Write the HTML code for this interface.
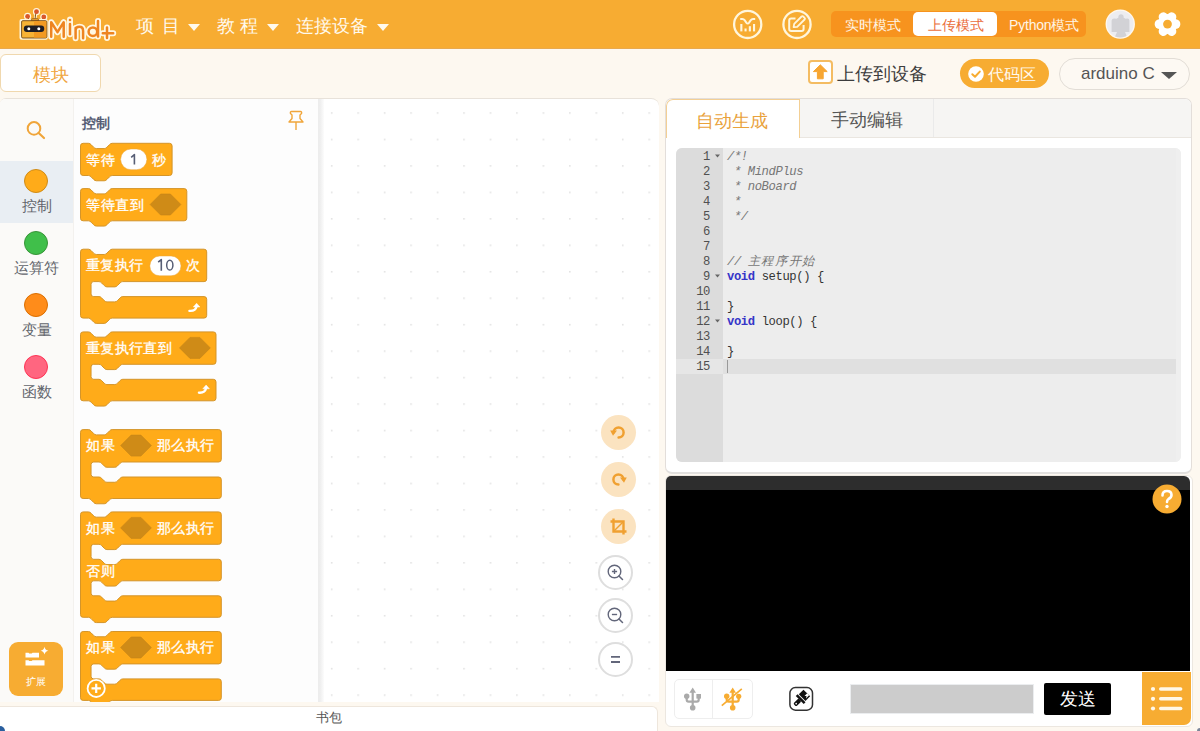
<!DOCTYPE html>
<html><head><meta charset="utf-8">
<style>
*{margin:0;padding:0;box-sizing:border-box;}
html,body{width:1200px;height:731px;overflow:hidden;background:#FDF8F0;font-family:"Liberation Sans",sans-serif;}
.a{position:absolute;}
#top{left:0;top:0;width:1200px;height:49px;background:#F7AC32;border-bottom:1px solid #E8A94E;}
.nav{position:absolute;top:14px;font-size:18px;color:#FFF9EC;line-height:24px;white-space:nowrap;}
.tri{position:absolute;width:0;height:0;border-left:6px solid transparent;border-right:6px solid transparent;border-top:7px solid #FFF9EC;}
.seg{position:absolute;top:11px;height:26px;font-size:14px;line-height:26px;color:#FFF5E6;white-space:nowrap;}
.cat{position:absolute;left:0;width:73px;height:62px;}
.cat .dot{position:absolute;left:24px;top:8px;width:24px;height:24px;border-radius:50%;}
.cat .lbl{position:absolute;left:0;width:73px;top:36px;text-align:center;font-size:15px;color:#62656C;line-height:20px;}
.blk{position:absolute;font-size:14px;color:#fff;line-height:18px;white-space:nowrap;}
.code{position:absolute;left:727px;font-family:"Liberation Mono",monospace;font-size:12.2px;letter-spacing:-0.39px;line-height:15px;color:#333;white-space:pre;}
.ln{position:absolute;left:676px;width:34px;text-align:right;font-family:"Liberation Mono",monospace;font-size:12.2px;letter-spacing:-0.39px;line-height:15px;color:#505050;}
.zb{position:absolute;border-radius:50%;}
</style></head><body>
<!-- ===== TOP BAR ===== -->
<div id="top" class="a">
  <svg class="a" style="left:0;top:0" width="130" height="49" viewBox="0 0 130 49">
    <!-- antennas -->
    <g stroke="#FFF6DC" stroke-width="2.6" fill="none" stroke-linecap="round">
      <line x1="27.6" y1="16.4" x2="29" y2="20"/><line x1="36.5" y1="11.7" x2="35" y2="19"/><line x1="43.8" y1="17" x2="42" y2="20"/>
    </g>
    <g fill="#FFF6DC"><circle cx="27.6" cy="16.4" r="3.6"/><circle cx="36.5" cy="11.7" r="3.6"/><circle cx="43.8" cy="17" r="3.6"/></g>
    <g stroke="#8A5A20" stroke-width="1" fill="none"><line x1="27.6" y1="16.4" x2="29" y2="20"/><line x1="36" y1="12" x2="35" y2="19"/><line x1="43.8" y1="17" x2="42" y2="20"/></g>
    <g fill="#D9582B"><circle cx="27.6" cy="16.4" r="2.4"/><circle cx="36.5" cy="11.7" r="2.4"/><circle cx="43.8" cy="17" r="2.4"/></g>
    <rect x="19.5" y="19" width="28.3" height="20.8" rx="2" fill="#FFF6DC"/>
    <path d="M31 20.5 Q31 18.6 33 18.6 H37 Q39 18.6 39 20.5Z" fill="#E9A030" stroke="#7A4A10" stroke-width="0.6"/>
    <rect x="21.6" y="20.7" width="25.2" height="17.3" rx="1.2" fill="#F8B334" stroke="#6E4512" stroke-width="0.9"/>
    <rect x="34" y="21.2" width="12.3" height="16.4" fill="#F29A22"/>
    <rect x="23.8" y="25.4" width="20.4" height="6.6" rx="3" fill="#1E1E24"/>
    <circle cx="28.8" cy="28.8" r="1.5" fill="#fff"/><circle cx="38.8" cy="28.8" r="1.5" fill="#fff"/>
    <!-- Mind+ -->
    <g fill="none" stroke="#FFF7E2" stroke-width="6" stroke-linecap="round" stroke-linejoin="round">
      <path d="M51.2 36.8 V22.2 L57.5 32.2 L63.7 22.2 V36.8"/>
      <path d="M70 19.6 V34.3"/>
      <path d="M75.6 38.2 V28 M75.6 30.5 C75.6 28 77.5 26.8 79.4 26.8 C82 26.8 83.1 28.4 83.1 31 V38.2"/>
      <circle cx="92.9" cy="31.7" r="4.3"/><path d="M98 20.9 V36.4"/>
      <path d="M102.8 33.2 H113.2 M107 27.6 V37.9"/>
    </g>
    <g fill="none" stroke="#EE8420" stroke-width="2.5" stroke-linecap="round" stroke-linejoin="round">
      <path d="M51.2 36.8 V22.2 L57.5 32.2 L63.7 22.2 V36.8"/>
      <path d="M70 24 V34.3"/>
      <path d="M75.6 38.2 V28 M75.6 30.5 C75.6 28 77.5 26.8 79.4 26.8 C82 26.8 83.1 28.4 83.1 31 V38.2"/>
      <circle cx="92.9" cy="31.7" r="4.3" fill="#FFF7E2"/><path d="M98 20.9 V36.4"/>
      <path d="M102.8 33.2 H113.2 M107 27.6 V37.9"/>
    </g>
    <circle cx="70" cy="20" r="1.3" fill="#EE8420"/>
  </svg>
  <div class="nav" style="left:136px;">项 <span style="margin-left:3px">目</span></div>
  <div class="tri" style="left:188px;top:24px;"></div>
  <div class="nav" style="left:217px;">教 程</div>
  <div class="tri" style="left:267px;top:24px;"></div>
  <div class="nav" style="left:296px;">连接设备</div>
  <div class="tri" style="left:377px;top:24px;"></div>

  <!-- circle icons -->
  <svg class="a" style="left:730px;top:8px" width="34" height="34" viewBox="0 0 34 34">
    <circle cx="17.7" cy="16.4" r="13.6" fill="none" stroke="#FFF6DC" stroke-width="2.3"/>
    <path d="M10.2 11 H12.3 Q13.8 11 14.8 12.4 L16.3 14.6 Q17.7 16.4 19.1 14.6 L20.6 12.4 Q21.6 11 23.1 11 H25.2" fill="none" stroke="#FFF6DC" stroke-width="2"/>
    <g fill="#FFF6DC"><rect x="10.3" y="16" width="2.1" height="7.4"/><rect x="14.5" y="20.5" width="2.1" height="2.9"/>
    <rect x="18.8" y="18.2" width="2.1" height="5.2"/><rect x="23" y="16" width="2.1" height="7.4"/></g>
  </svg>
  <svg class="a" style="left:780px;top:8px" width="34" height="34" viewBox="0 0 34 34">
    <circle cx="17" cy="16.4" r="13.6" fill="none" stroke="#FFF6DC" stroke-width="2.3"/>
    <path d="M15.5 10.6 H11.2 Q9.2 10.6 9.2 12.6 V21 Q9.2 23 11.2 23 H21.6 Q23.6 23 23.6 21 V17" fill="none" stroke="#FFF6DC" stroke-width="2"/>
    <path d="M13.6 19.2 L14.2 15.9 L21.6 8.5 Q22.4 7.7 23.2 8.5 L24.6 9.9 Q25.4 10.7 24.6 11.5 L17.2 18.9 Z" fill="none" stroke="#FFF6DC" stroke-width="1.8" stroke-linejoin="round"/>
  </svg>

  <!-- mode segmented -->
  <div class="a" style="left:831px;top:11px;width:255px;height:26px;background:#F7931E;border-radius:5px;"></div>
  <div class="a" style="left:913px;top:12px;width:84px;height:24px;background:#fff;border-radius:5px;"></div>
  <div class="seg" style="left:845px;top:12px;">实时模式</div>
  <div class="seg" style="left:928px;top:12px;color:#EA6E3C;">上传模式</div>
  <div class="seg" style="left:1009px;top:12px;letter-spacing:-0.2px;">Python模式</div>

  <!-- avatar -->
  <svg class="a" style="left:1104px;top:8px" width="34" height="34" viewBox="0 0 34 34">
    <defs><clipPath id="avc"><circle cx="16.25" cy="16.1" r="13.4"/></clipPath></defs>
    <circle cx="16.25" cy="16.1" r="14.7" fill="#FFF8EE"/>
    <circle cx="16.25" cy="16.1" r="13.4" fill="#EDEDF0"/>
    <g clip-path="url(#avc)" fill="#D2D2D6">
      <circle cx="17" cy="8.8" r="2.6"/>
      <path d="M7.6 12.5 Q8 10.6 10 10.6 L12.5 10.8 L14.5 9.5 H19.5 L21.5 10.8 L23.5 10.6 Q25.3 10.6 25.4 12.5 V24 H21 L24 31 H10 L13 24 H7.6 Z"/>
    </g>
  </svg>
  <!-- gear -->
  <svg class="a" style="left:1151px;top:8px" width="34" height="34" viewBox="0 0 34 34">
    <g fill="#FFFFFF">
      <circle cx="16.5" cy="16.1" r="10"/>
      <g transform="translate(16.5 16.1)">
        <rect x="-4.6" y="-12.8" width="9.2" height="25.6" rx="4.2" transform="rotate(30)"/>
        <rect x="-4.6" y="-12.8" width="9.2" height="25.6" rx="4.2" transform="rotate(90)"/>
        <rect x="-4.6" y="-12.8" width="9.2" height="25.6" rx="4.2" transform="rotate(150)"/>
      </g>
    </g>
    <circle cx="16.5" cy="16.1" r="4.4" fill="#F7AC32"/>
  </svg>
</div>

<!-- ===== SECOND ROW ===== -->
<div class="a" style="left:0;top:54px;width:101px;height:38px;background:#fff;border:1px solid #F0D8AE;border-radius:6px;color:#F0A640;font-size:18px;line-height:41px;text-align:center;">模块</div>

<!-- upload -->
<div class="a" style="left:808px;top:60px;width:25px;height:24px;border:2px solid #F4BC62;border-radius:4px;background:#fff;"></div>
<svg class="a" style="left:808px;top:60px" width="25" height="24" viewBox="0 0 25 24">
  <path d="M12.3 4.8 L19.2 11.6 H15.2 V18.8 H9.4 V11.6 H5.4 Z" fill="#F7A632" stroke="#F7A632" stroke-width="1" stroke-linejoin="round"/>
</svg>
<div class="a" style="left:837px;top:62px;font-size:18px;line-height:24px;color:#3D3D3D;white-space:nowrap;">上传到设备</div>

<!-- code area pill -->
<div class="a" style="left:960px;top:59px;width:89px;height:29px;background:#F7AC32;border-radius:15px;"></div>
<svg class="a" style="left:967px;top:65px" width="18" height="18" viewBox="0 0 18 18">
  <circle cx="9" cy="9" r="7.8" fill="#fff"/>
  <path d="M5.3 9.2 L8 11.8 L12.8 6.6" fill="none" stroke="#F7AC32" stroke-width="2" stroke-linecap="round" stroke-linejoin="round"/>
</svg>
<div class="a" style="left:988px;top:62px;font-size:16px;letter-spacing:0.2px;line-height:25px;color:#FFF9EE;white-space:nowrap;">代码区</div>

<!-- arduino dropdown -->
<div class="a" style="left:1059px;top:58px;width:131px;height:32px;background:#FDF9F3;border:1px solid #E2DDD6;border-radius:16px;"></div>
<div class="a" style="left:1081px;top:62px;font-size:17px;line-height:24px;color:#555;white-space:nowrap;">arduino C</div>
<div class="a" style="left:1161px;top:72px;width:0;height:0;border-left:8px solid transparent;border-right:8px solid transparent;border-top:7.5px solid #555;"></div>

<!-- ===== LEFT AREA ===== -->
<div class="a" style="left:0;top:98px;width:659px;height:604px;background:#fff;border-top:1px solid #E8E2DA;border-radius:6px 8px 0 0;overflow:hidden;">
</div>
<!-- sidebar -->
<div class="a" style="left:0;top:99px;width:74px;height:603px;background:#FBFAF8;border-right:1px solid #F3F1EE;border-top-left-radius:5px;"></div>
<!-- flyout bg -->
<div class="a" style="left:74px;top:99px;width:244px;height:603px;background:#FDFDFD;"></div>
<div class="a" style="left:318px;top:99px;width:6px;height:603px;background:linear-gradient(to right,#EDEDED 0%,#EEEEEE 35%,#FCFCFC 100%);"></div>

<!-- workspace dots -->
<svg class="a" style="left:321px;top:99px" width="338" height="603">
  <defs><pattern id="dots" patternUnits="userSpaceOnUse" x="9.9" y="13.2" width="26.46" height="26.46">
    <rect x="0" y="0" width="1.6" height="1.6" fill="#E2E2E2"/></pattern></defs>
  <rect width="338" height="603" fill="url(#dots)"/>
</svg>

<!-- zoom controls -->
<div class="zb" style="left:601px;top:415px;width:35px;height:35px;background:#FBE3C0;"></div>
<svg class="a" style="left:601px;top:415px" width="35" height="35" viewBox="0 0 35 35">
  <path d="M12.6 17.5 A5 5 0 1 1 17.6 22.5" fill="none" stroke="#F0A030" stroke-width="2.5" stroke-linecap="round"/>
  <path d="M9.2 15.6 L16 15.6 L12 20.8 Z" fill="#F0A030"/>
</svg>
<div class="zb" style="left:601px;top:462px;width:35px;height:35px;background:#FBE3C0;"></div>
<svg class="a" style="left:601px;top:462px" width="35" height="35" viewBox="0 0 35 35">
  <path d="M22.4 17.5 A5 5 0 1 0 17.4 22.5" fill="none" stroke="#F0A030" stroke-width="2.5" stroke-linecap="round"/>
  <path d="M25.8 15.6 L19 15.6 L23 20.8 Z" fill="#F0A030"/>
</svg>
<div class="zb" style="left:601px;top:509px;width:35px;height:35px;background:#FBE3C0;"></div>
<svg class="a" style="left:601px;top:509px" width="35" height="35" viewBox="0 0 35 35">
  <path d="M12.5 9.5 V22.5 H25.5 M9.5 12.5 H22.5 V25.5" fill="none" stroke="#F0A030" stroke-width="2.4"/>
  <path d="M12.5 22.5 L22.5 12.5" stroke="#F0A030" stroke-width="1.5"/>
</svg>
<div class="zb" style="left:598px;top:555px;width:35px;height:35px;background:#fff;border:2px solid #DEDEDE;"></div>
<svg class="a" style="left:598px;top:555px" width="35" height="35" viewBox="0 0 35 35">
  <circle cx="16.5" cy="16.5" r="6.3" fill="none" stroke="#62667A" stroke-width="1.4"/>
  <path d="M21 21 L24.5 24.5" stroke="#62667A" stroke-width="1.5" stroke-linecap="round"/>
  <path d="M13.9 16.5 H19.1 M16.5 13.9 V19.1" stroke="#62667A" stroke-width="1.4"/>
</svg>
<div class="zb" style="left:598px;top:598px;width:35px;height:35px;background:#fff;border:2px solid #DEDEDE;"></div>
<svg class="a" style="left:598px;top:598px" width="35" height="35" viewBox="0 0 35 35">
  <circle cx="16.5" cy="16.5" r="6.3" fill="none" stroke="#62667A" stroke-width="1.4"/>
  <path d="M21 21 L24.5 24.5" stroke="#62667A" stroke-width="1.5" stroke-linecap="round"/>
  <path d="M13.9 16.5 H19.1" stroke="#62667A" stroke-width="1.4"/>
</svg>
<div class="zb" style="left:598px;top:642px;width:35px;height:35px;background:#fff;border:2px solid #DEDEDE;"></div>
<svg class="a" style="left:598px;top:642px" width="35" height="35" viewBox="0 0 35 35">
  <path d="M13 14.8 H22 M13 20 H22" stroke="#62667A" stroke-width="1.8"/>
</svg>

<!-- search -->
<svg class="a" style="left:22px;top:116px" width="26" height="26" viewBox="0 0 26 26">
  <circle cx="12" cy="12.4" r="6.3" fill="none" stroke="#F0A53A" stroke-width="2"/>
  <path d="M16.7 17 L22 22" stroke="#F0A53A" stroke-width="2.2" stroke-linecap="round"/>
</svg>

<!-- categories -->
<div class="cat" style="top:161px;background:#E9EEF3;"><div class="dot" style="background:#FFAB19;border:1px solid #CF8B17;top:8px;"></div><div class="lbl" style="top:35px;">控制</div></div>
<div class="cat" style="top:223px;"><div class="dot" style="background:#40BF4A;border:1px solid #389438;top:8px;"></div><div class="lbl" style="top:35px;">运算符</div></div>
<div class="cat" style="top:285px;"><div class="dot" style="background:#FF8C1A;border:1px solid #DB6E00;top:8px;"></div><div class="lbl" style="top:35px;">变量</div></div>
<div class="cat" style="top:347px;"><div class="dot" style="background:#FF6680;border:1px solid #FF3355;top:8px;"></div><div class="lbl" style="top:35px;">函数</div></div>

<!-- extension button -->
<div class="a" style="left:9px;top:642px;width:54px;height:54px;background:#F7AC32;border-radius:9px;"></div>
<svg class="a" style="left:9px;top:642px" width="54" height="54" viewBox="0 0 54 54">
  <path d="M16.5 10.7 h3 l0.8 0.8 h2.4 l0.8 -0.8 h6.5 v4.8 h-13.5z" fill="#fff"/>
  <path d="M16.5 18.2 h3 l0.8 0.8 h2.4 l0.8 -0.8 h12 v5.2 h-19z" fill="#fff"/>
  <path d="M35.5 4.8 Q36.1 8.1 39.4 8.7 Q36.1 9.3 35.5 12.6 Q34.9 9.3 31.6 8.7 Q34.9 8.1 35.5 4.8Z" fill="#fff"/>
</svg>
<div class="a" style="left:9px;top:675px;width:54px;text-align:center;font-size:10px;line-height:14px;color:#fff;">扩展</div>

<!-- flyout heading -->
<div class="a" style="left:82px;top:114px;font-size:14px;font-weight:bold;color:#575E75;line-height:18px;">控制</div>
<svg class="a" style="left:286px;top:109px" width="20" height="24" viewBox="0 0 20 24">
  <path d="M5.5 2.5 H14.5 Q16 2.5 15.5 4.5 L14 6 V9.5 L17 13 H3 L6 9.5 V6 L4.5 4.5 Q4 2.5 5.5 2.5 Z" fill="none" stroke="#F0A53A" stroke-width="1.4" stroke-linejoin="round"/>
  <path d="M10 13 V21" stroke="#F0A53A" stroke-width="1.4"/>
</svg>

<!-- BLOCKS -->
<svg class="a" style="left:0;top:0" width="330" height="702" viewBox="0 0 330 702" font-family="Liberation Sans">
<g fill="#FFAB19" stroke="#D39428" stroke-width="1.5">
<path transform="translate(80.5 143.3) scale(0.66)" d="M 0,4 A 4,4 0 0,1 4,0 H 12 c 2,0 3,1 4,2 l 4,4 c 1,1 2,2 4,2 h 12 c 2,0 3,-1 4,-2 l 4,-4 c 1,-1 2,-2 4,-2 H 134.78787878787878 A 4,4 0 0,1 138.78787878787878,4 V 44.78787878787879 A 4,4 0 0,1 134.78787878787878,48.78787878787879 H 48 c -2,0 -3,1 -4,2 l -4,4 c -1,1 -2,2 -4,2 h -12 c -2,0 -3,-1 -4,-2 l -4,-4 c -1,-1 -2,-2 -4,-2 H 4 A 4,4 0 0,1 0,44.78787878787879 Z"/>
<path transform="translate(80.5 188.6) scale(0.66)" d="M 0,4 A 4,4 0 0,1 4,0 H 12 c 2,0 3,1 4,2 l 4,4 c 1,1 2,2 4,2 h 12 c 2,0 3,-1 4,-2 l 4,-4 c 1,-1 2,-2 4,-2 H 157.06060606060606 A 4,4 0 0,1 161.06060606060606,4 V 44.78787878787879 A 4,4 0 0,1 157.06060606060606,48.78787878787879 H 48 c -2,0 -3,1 -4,2 l -4,4 c -1,1 -2,2 -4,2 h -12 c -2,0 -3,-1 -4,-2 l -4,-4 c -1,-1 -2,-2 -4,-2 H 4 A 4,4 0 0,1 0,44.78787878787879 Z"/>
<path transform="translate(80.5 249.2) scale(0.66)" d="M 0,4 A 4,4 0 0,1 4,0 H 12 c 2,0 3,1 4,2 l 4,4 c 1,1 2,2 4,2 h 12 c 2,0 3,-1 4,-2 l 4,-4 c 1,-1 2,-2 4,-2 H 187.21212121212122 A 4,4 0 0,1 191.21212121212122,4 V 45.090909090909086 A 4,4 0 0,1 187.21212121212122,49.090909090909086 H 64 c -2,0 -3,1 -4,2 l -4,4 c -1,1 -2,2 -4,2 h -12 c -2,0 -3,-1 -4,-2 l -4,-4 c -1,-1 -2,-2 -4,-2 H 20 A 4,4 0 0,0 16,53.090909090909086 V 67.81818181818181 A 4,4 0 0,0 20,71.81818181818181 H 28 c 2,0 3,1 4,2 l 4,4 c 1,1 2,2 4,2 h 12 c 2,0 3,-1 4,-2 l 4,-4 c 1,-1 2,-2 4,-2 H 187.21212121212122 A 4,4 0 0,1 191.21212121212122,75.81818181818181 V 100.39393939393938 A 4,4 0 0,1 187.21212121212122,104.39393939393938 H 48 c -2,0 -3,1 -4,2 l -4,4 c -1,1 -2,2 -4,2 h -12 c -2,0 -3,-1 -4,-2 l -4,-4 c -1,-1 -2,-2 -4,-2 H 4 A 4,4 0 0,1 0,100.39393939393938 Z"/>
<path transform="translate(80.5 331.9) scale(0.66)" d="M 0,4 A 4,4 0 0,1 4,0 H 12 c 2,0 3,1 4,2 l 4,4 c 1,1 2,2 4,2 h 12 c 2,0 3,-1 4,-2 l 4,-4 c 1,-1 2,-2 4,-2 H 201.30303030303028 A 4,4 0 0,1 205.30303030303028,4 V 45.090909090909086 A 4,4 0 0,1 201.30303030303028,49.090909090909086 H 64 c -2,0 -3,1 -4,2 l -4,4 c -1,1 -2,2 -4,2 h -12 c -2,0 -3,-1 -4,-2 l -4,-4 c -1,-1 -2,-2 -4,-2 H 20 A 4,4 0 0,0 16,53.090909090909086 V 67.81818181818181 A 4,4 0 0,0 20,71.81818181818181 H 28 c 2,0 3,1 4,2 l 4,4 c 1,1 2,2 4,2 h 12 c 2,0 3,-1 4,-2 l 4,-4 c 1,-1 2,-2 4,-2 H 201.30303030303028 A 4,4 0 0,1 205.30303030303028,75.81818181818181 V 100.39393939393938 A 4,4 0 0,1 201.30303030303028,104.39393939393938 H 48 c -2,0 -3,1 -4,2 l -4,4 c -1,1 -2,2 -4,2 h -12 c -2,0 -3,-1 -4,-2 l -4,-4 c -1,-1 -2,-2 -4,-2 H 4 A 4,4 0 0,1 0,100.39393939393938 Z"/>
<path transform="translate(80.5 429.6) scale(0.66)" d="M 0,4 A 4,4 0 0,1 4,0 H 12 c 2,0 3,1 4,2 l 4,4 c 1,1 2,2 4,2 h 12 c 2,0 3,-1 4,-2 l 4,-4 c 1,-1 2,-2 4,-2 H 209.33333333333334 A 4,4 0 0,1 213.33333333333334,4 V 45.090909090909086 A 4,4 0 0,1 209.33333333333334,49.090909090909086 H 64 c -2,0 -3,1 -4,2 l -4,4 c -1,1 -2,2 -4,2 h -12 c -2,0 -3,-1 -4,-2 l -4,-4 c -1,-1 -2,-2 -4,-2 H 20 A 4,4 0 0,0 16,53.090909090909086 V 67.81818181818181 A 4,4 0 0,0 20,71.81818181818181 H 28 c 2,0 3,1 4,2 l 4,4 c 1,1 2,2 4,2 h 12 c 2,0 3,-1 4,-2 l 4,-4 c 1,-1 2,-2 4,-2 H 209.33333333333334 A 4,4 0 0,1 213.33333333333334,75.81818181818181 V 100.39393939393938 A 4,4 0 0,1 209.33333333333334,104.39393939393938 H 48 c -2,0 -3,1 -4,2 l -4,4 c -1,1 -2,2 -4,2 h -12 c -2,0 -3,-1 -4,-2 l -4,-4 c -1,-1 -2,-2 -4,-2 H 4 A 4,4 0 0,1 0,100.39393939393938 Z"/>
<path transform="translate(80.5 511.9) scale(0.66)" d="M 0,4 A 4,4 0 0,1 4,0 H 12 c 2,0 3,1 4,2 l 4,4 c 1,1 2,2 4,2 h 12 c 2,0 3,-1 4,-2 l 4,-4 c 1,-1 2,-2 4,-2 H 209.33333333333334 A 4,4 0 0,1 213.33333333333334,4 V 45.090909090909086 A 4,4 0 0,1 209.33333333333334,49.090909090909086 H 64 c -2,0 -3,1 -4,2 l -4,4 c -1,1 -2,2 -4,2 h -12 c -2,0 -3,-1 -4,-2 l -4,-4 c -1,-1 -2,-2 -4,-2 H 20 A 4,4 0 0,0 16,53.090909090909086 V 67.81818181818181 A 4,4 0 0,0 20,71.81818181818181 H 28 c 2,0 3,1 4,2 l 4,4 c 1,1 2,2 4,2 h 12 c 2,0 3,-1 4,-2 l 4,-4 c 1,-1 2,-2 4,-2 H 209.33333333333334 A 4,4 0 0,1 213.33333333333334,75.81818181818181 V 100.39393939393938 A 4,4 0 0,1 209.33333333333334,104.39393939393938 H 64 c -2,0 -3,1 -4,2 l -4,4 c -1,1 -2,2 -4,2 h -12 c -2,0 -3,-1 -4,-2 l -4,-4 c -1,-1 -2,-2 -4,-2 H 20 A 4,4 0 0,0 16,108.39393939393938 V 123.1212121212121 A 4,4 0 0,0 20,127.1212121212121 H 28 c 2,0 3,1 4,2 l 4,4 c 1,1 2,2 4,2 h 12 c 2,0 3,-1 4,-2 l 4,-4 c 1,-1 2,-2 4,-2 H 209.33333333333334 A 4,4 0 0,1 213.33333333333334,131.1212121212121 V 155.69696969696966 A 4,4 0 0,1 209.33333333333334,159.69696969696966 H 48 c -2,0 -3,1 -4,2 l -4,4 c -1,1 -2,2 -4,2 h -12 c -2,0 -3,-1 -4,-2 l -4,-4 c -1,-1 -2,-2 -4,-2 H 4 A 4,4 0 0,1 0,155.69696969696966 Z"/>
<path transform="translate(80.5 631.5) scale(0.66)" d="M 0,4 A 4,4 0 0,1 4,0 H 12 c 2,0 3,1 4,2 l 4,4 c 1,1 2,2 4,2 h 12 c 2,0 3,-1 4,-2 l 4,-4 c 1,-1 2,-2 4,-2 H 209.33333333333334 A 4,4 0 0,1 213.33333333333334,4 V 45.090909090909086 A 4,4 0 0,1 209.33333333333334,49.090909090909086 H 64 c -2,0 -3,1 -4,2 l -4,4 c -1,1 -2,2 -4,2 h -12 c -2,0 -3,-1 -4,-2 l -4,-4 c -1,-1 -2,-2 -4,-2 H 20 A 4,4 0 0,0 16,53.090909090909086 V 67.81818181818181 A 4,4 0 0,0 20,71.81818181818181 H 28 c 2,0 3,1 4,2 l 4,4 c 1,1 2,2 4,2 h 12 c 2,0 3,-1 4,-2 l 4,-4 c 1,-1 2,-2 4,-2 H 209.33333333333334 A 4,4 0 0,1 213.33333333333334,75.81818181818181 V 100.39393939393938 A 4,4 0 0,1 209.33333333333334,104.39393939393938 H 48 c -2,0 -3,1 -4,2 l -4,4 c -1,1 -2,2 -4,2 h -12 c -2,0 -3,-1 -4,-2 l -4,-4 c -1,-1 -2,-2 -4,-2 H 4 A 4,4 0 0,1 0,100.39393939393938 Z"/>
</g>
<text x="86.4" y="164.5" font-size="14.3" letter-spacing="0.4" fill="#fff" stroke="#fff" stroke-width="0.3">等待</text>
<rect x="120.6" y="149" width="26.3" height="20.7" rx="10.35" fill="#fff" stroke="#E9A53A" stroke-width="0.5"/>
<path d="M 131.2,157.4 L 134.4,154.6 V 164.6" fill="none" stroke="#575E75" stroke-width="1.6" stroke-linejoin="round"/>
<text x="151.8" y="164.5" font-size="14.3" letter-spacing="0.4" fill="#fff" stroke="#fff" stroke-width="0.3">秒</text>
<text x="86.4" y="209.79999999999998" font-size="14.3" letter-spacing="0.4" fill="#fff" stroke="#fff" stroke-width="0.3">等待直到</text>
<path d="M 160.6,194 H 170.4 L 180.9,204.5 L 170.4,215 H 160.6 L 150.1,204.5 Z" fill="#CF8B17" stroke="#C4841A" stroke-width="0.6"/>
<text x="85.8" y="270.4" font-size="14.3" letter-spacing="0.4" fill="#fff" stroke="#fff" stroke-width="0.3">重复执行</text>
<rect x="149.8" y="256" width="31.2" height="19.8" rx="9.9" fill="#fff" stroke="#E9A53A" stroke-width="0.5"/>
<path d="M 158.2,262.2 L 161.3,259.6 V 270.8" fill="none" stroke="#575E75" stroke-width="1.6" stroke-linejoin="round"/>
<ellipse cx="169.8" cy="265.2" rx="3.1" ry="4.9" fill="none" stroke="#575E75" stroke-width="1.5"/>
<text x="186.3" y="270.4" font-size="14.3" letter-spacing="0.4" fill="#fff" stroke="#fff" stroke-width="0.3">次</text>
<path d="M 189.4,310.9 Q 195.5,311.3 196.6,306.5" fill="none" stroke="#fff" stroke-width="2.3" stroke-linecap="round"/><path d="M 193.3,307.0 L 199.9,307.0 L 196.6,303.3 Z" fill="#fff" stroke="#fff" stroke-width="0.5" stroke-linejoin="round"/>
<text x="85.8" y="353.09999999999997" font-size="14.3" letter-spacing="0.4" fill="#fff" stroke="#fff" stroke-width="0.3">重复执行直到</text>
<path d="M 190.0,337.4 H 199.8 L 210.3,347.9 L 199.8,358.4 H 190.0 L 179.5,347.9 Z" fill="#CF8B17" stroke="#C4841A" stroke-width="0.6"/>
<path d="M 198.9,392.7 Q 205.0,393.1 206.1,388.3" fill="none" stroke="#fff" stroke-width="2.3" stroke-linecap="round"/><path d="M 202.8,388.8 L 209.4,388.8 L 206.1,385.1 Z" fill="#fff" stroke="#fff" stroke-width="0.5" stroke-linejoin="round"/>
<text x="86.4" y="450.40000000000003" font-size="14.3" letter-spacing="0.4" fill="#fff" stroke="#fff" stroke-width="0.3">如果</text>
<path d="M 131.1,435.1 H 140.9 L 151.4,445.6 L 140.9,456.1 H 131.1 L 120.6,445.6 Z" fill="#CF8B17" stroke="#C4841A" stroke-width="0.6"/>
<text x="157" y="450.40000000000003" font-size="14.3" letter-spacing="0.4" fill="#fff" stroke="#fff" stroke-width="0.3">那么执行</text>
<text x="86.4" y="532.7" font-size="14.3" letter-spacing="0.4" fill="#fff" stroke="#fff" stroke-width="0.3">如果</text>
<path d="M 131.1,517.4 H 140.9 L 151.4,527.9 L 140.9,538.4 H 131.1 L 120.6,527.9 Z" fill="#CF8B17" stroke="#C4841A" stroke-width="0.6"/>
<text x="157" y="532.7" font-size="14.3" letter-spacing="0.4" fill="#fff" stroke="#fff" stroke-width="0.3">那么执行</text>
<text x="86.4" y="652.3000000000001" font-size="14.3" letter-spacing="0.4" fill="#fff" stroke="#fff" stroke-width="0.3">如果</text>
<path d="M 131.1,637.0 H 140.9 L 151.4,647.5 L 140.9,658.0 H 131.1 L 120.6,647.5 Z" fill="#CF8B17" stroke="#C4841A" stroke-width="0.6"/>
<text x="157" y="652.3000000000001" font-size="14.3" letter-spacing="0.4" fill="#fff" stroke="#fff" stroke-width="0.3">那么执行</text>
<text x="86.4" y="575.7" font-size="14.3" letter-spacing="0.4" fill="#fff" stroke="#fff" stroke-width="0.3">否则</text>
<circle cx="96.2" cy="688.4" r="8.6" fill="none" stroke="#fff" stroke-width="1.8"/><path d="M 91.5,688.4 H 100.9 M 96.2,683.7 V 693.1" stroke="#fff" stroke-width="2.2"/>
</svg>

<!-- bottom bar -->
<div class="a" style="left:0;top:706px;width:658px;height:25px;background:#fff;border-top:1px solid #EEE6DC;border-right:1px solid #EEE6DC;border-radius:0 6px 0 0;"></div>
<div class="a" style="left:316px;top:709px;font-size:13px;line-height:17px;color:#555;">书包</div>

<!-- ===== CODE PANEL ===== -->
<div class="a" style="left:665px;top:98px;width:527px;height:376px;background:#fff;border:1px solid #E3DEDA;border-bottom:2px solid #E2E0DE;border-radius:7px;overflow:hidden;">
  <div class="a" style="left:0;top:0;width:527px;height:39px;background:#F6F5F3;border-bottom:1px solid #EAE6E0;"></div>
  <div class="a" style="left:0;top:0;width:134px;height:39px;background:#fff;border:1px solid #F3CF94;border-bottom:none;border-radius:7px 0 0 0;"></div>
  <div class="a" style="left:267px;top:0;width:1px;height:38px;background:#EAEAEA;"></div>
</div>
<div class="a" style="left:696px;top:109px;font-size:18px;line-height:24px;color:#E9A23B;">自动生成</div>
<div class="a" style="left:831px;top:108px;font-size:18px;line-height:24px;color:#555;">手动编辑</div>

<!-- editor -->
<div class="a" style="left:676px;top:148px;width:505px;height:314px;background:#EDEDED;border-radius:6px;overflow:hidden;">
  <div class="a" style="left:0;top:0;width:47px;height:314px;background:#DCDCDC;"></div>
  <div class="a" style="left:0;top:211px;width:47px;height:15px;background:#E6E6E6;"></div>
  <div class="a" style="left:47px;top:211px;width:453px;height:15px;background:#E0E0E0;"></div>
  <div class="a" style="left:500px;top:0;width:5px;height:314px;background:#EFEFEF;"></div>
</div>
<div class="ln" style="top:150px;">1<br>2<br>3<br>4<br>5<br>6<br>7<br>8<br>9<br>10<br>11<br>12<br>13<br>14<br>15</div>
<svg class="a" style="left:712px;top:148px" width="12" height="200">
  <path d="M3 6.5 H8 L5.5 9.5Z M3 126.5 H8 L5.5 129.5Z M3 171.5 H8 L5.5 174.5Z" fill="#666"/>
</svg>
<div class="code" style="top:150px;font-style:italic;color:#767676;">/*!
 * MindPlus
 * noBoard
 *
 */


// <span style="letter-spacing:1.66px;font-size:12.2px">主程序开始</span></div>
<div class="code" style="top:270px;"><b style="color:#3535C8;">void</b> setup() {

}
<b style="color:#3535C8;">void</b> loop() {

}</div>
<div class="a" style="left:727px;top:360px;width:1px;height:13px;background:#999;"></div>

<!-- ===== SERIAL PANEL ===== -->
<div class="a" style="left:665px;top:475px;width:528px;height:252px;background:#fff;border:1px solid #ECE7E0;border-radius:6px;overflow:hidden;">
  <div class="a" style="left:0;top:0;width:524px;height:14px;background:#2D2D2D;border-radius:0 6px 0 0;"></div>
  <div class="a" style="left:0;top:14px;width:524px;height:181px;background:#000;"></div>
</div>
<svg class="a" style="left:1151px;top:483px" width="32" height="32" viewBox="0 0 32 32">
  <circle cx="16" cy="16" r="14.5" fill="#F7AC32"/>
  <path d="M11.5 12.5 Q11.5 8 16 8 Q20.5 8 20.5 12 Q20.5 14.5 17.5 16 Q16 17 16 19" fill="none" stroke="#fff" stroke-width="2.6" stroke-linecap="round"/>
  <circle cx="16" cy="23.5" r="1.7" fill="#fff"/>
</svg>

<!-- serial toolbar -->
<div class="a" style="left:674px;top:679px;width:79px;height:40px;border:1px solid #EEEEEE;border-radius:5px;background:#fff;"></div>
<div class="a" style="left:712px;top:680px;width:1px;height:38px;background:#EEEEEE;"></div>
<svg class="a" style="left:680px;top:684px" width="26" height="30" viewBox="0 0 26 30">
  <g fill="#AAAAAA" stroke="#AAAAAA">
    <path d="M12.7 3.6 L16 8.8 H9.4 Z" stroke="none"/>
    <path d="M12.7 7 V23" stroke-width="2.2" fill="none"/>
    <path d="M6.7 12.5 V15.8 Q6.7 17.7 8.6 17.7 H16.8 Q18.7 17.7 18.7 15.8 V12.5" stroke-width="2.2" fill="none"/>
    <circle cx="6.7" cy="12.3" r="2.7" stroke="none"/><rect x="16.4" y="10" width="4.6" height="4.6" stroke="none"/>
    <circle cx="12.7" cy="23.7" r="2.8" stroke="none"/>
  </g>
</svg>
<svg class="a" style="left:719px;top:684px" width="30" height="30" viewBox="0 0 30 30">
  <g fill="#F7AC32" stroke="#F7AC32">
    <path d="M13.7 3.6 L17 8.8 H10.4 Z" stroke="none"/>
    <path d="M13.7 7 V23" stroke-width="2.2" fill="none"/>
    <path d="M7.7 12.5 V15.8 Q7.7 17.7 9.6 17.7 H17.8 Q19.7 17.7 19.7 15.8 V12.5" stroke-width="2.2" fill="none"/>
    <circle cx="7.7" cy="12.3" r="2.7" stroke="none"/><circle cx="19.7" cy="12.3" r="2.6" stroke="none"/>
    <circle cx="13.7" cy="23.7" r="2.8" stroke="none"/>
    <path d="M2.8 21.6 L22.8 4.9" stroke-width="1.7" fill="none"/>
  </g>
</svg>
<svg class="a" style="left:788px;top:686px" width="26" height="26" viewBox="0 0 26 26">
  <rect x="1.9" y="1.6" width="22.6" height="22.6" rx="5.5" fill="#fff" stroke="#333" stroke-width="1.5"/>
  <g transform="rotate(45 13 12.8)">
    <rect x="8.3" y="4.6" width="9.4" height="6.6" fill="#111"/>
    <path d="M13.5 4.6 V8.3 L15 7 L16.2 9 V4.6 Z" fill="#fff"/>
    <rect x="7.4" y="12" width="11.2" height="2.6" fill="#111"/>
    <rect x="10.9" y="14.2" width="4.2" height="7.6" rx="1.6" fill="#111"/>
    <circle cx="13" cy="19.6" r="0.8" fill="#fff"/>
  </g>
</svg>
<div class="a" style="left:850px;top:684px;width:184px;height:30px;background:#CCCCCC;border:1.5px solid #EBEDEF;"></div>
<div class="a" style="left:1044px;top:683px;width:67px;height:32px;background:#000;border-radius:2px;color:#fff;font-size:18px;line-height:33px;text-align:center;">发送</div>
<div class="a" style="left:1142px;top:672px;width:49px;height:53px;background:#F7AC32;border-radius:0 0 7px 0;"></div>
<svg class="a" style="left:1142px;top:672px" width="49" height="53" viewBox="0 0 49 53">
  <g fill="#FFF8E8"><circle cx="11" cy="17" r="2.1"/><circle cx="11" cy="26.8" r="2.1"/><circle cx="11" cy="36.5" r="2.1"/>
  <rect x="17" y="15.3" width="23.4" height="3.4" rx="1.7"/><rect x="17" y="25.1" width="23.4" height="3.4" rx="1.7"/><rect x="17" y="34.8" width="23.4" height="3.4" rx="1.7"/></g>
</svg>

<div class="a" style="left:0;top:726px;width:5px;height:5px;background:#2A5F9E;border-top-right-radius:5px;"></div>
<div class="a" style="left:1197px;top:728px;width:3px;height:3px;background:#7C8699;border-top-left-radius:3px;"></div>
</body></html>
